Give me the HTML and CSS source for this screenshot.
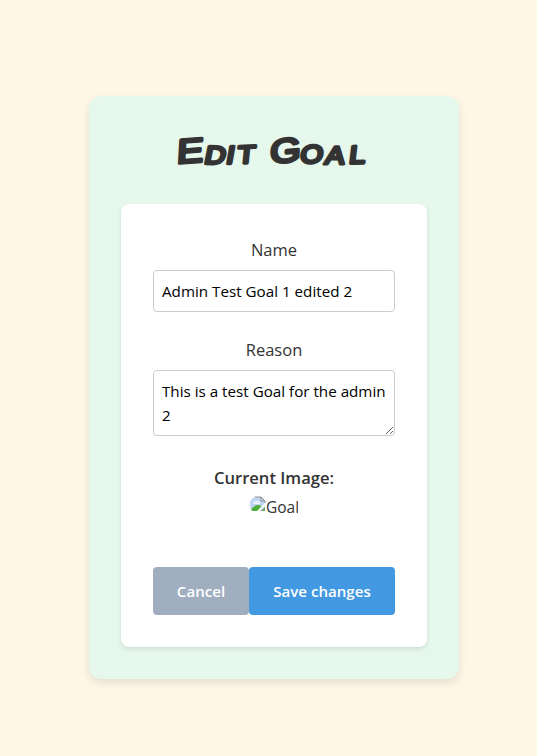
FILE: index.html
```
<!DOCTYPE html>
<html lang="en">
<head>
<meta charset="utf-8">
<title>Edit Goal</title>
<link rel="stylesheet" href="styles.css">
</head>
<body>
<main class="card">
  <h1 class="title">
    <svg class="lettering" width="200" height="48" viewBox="0 0 200 48">
      <text transform="translate(2.500 35.500) skewX(-9) scale(1.15 1)" y="0" x="0 23.500 42.500 52.500 66 81 107.500 128.500 149.500" rotate="-5 2 1 -3 0 -6 -4 0 -2"><tspan class="capital">E</tspan><tspan>DIT </tspan><tspan class="capital">G</tspan><tspan>OAL</tspan></text>
    </svg>
  </h1>
  <form class="form">
    <label class="label" for="name">Name</label>
    <input class="field" id="name" type="text" value="Admin Test Goal 1 edited 2">
    <label class="label" for="reason">Reason</label>
    <textarea class="field area" id="reason">This is a test Goal for the admin 2</textarea>
    <p class="caption">Current Image:</p>
    <div class="image">
      <svg class="broken" width="16" height="16" viewBox="0 0 16 16">
        <path d="M0 6q1-4 5-5h6l4 4v10H3q-3-1-3-5z" fill="#c3d5f5"/>
        <path d="M3 8q0-2 2-2 1-2 3-1 2 0 2 3z" fill="#edf3ff"/>
        <path d="M1 14q3-5 7-5l4 1-4 5H3z" fill="#4caf3d"/>
        <path d="M16 6v3l-7 6H7z" fill="#fff"/>
        <path d="M15 11v4h-4z" fill="#6aa865"/>
        <path d="M5 1h6l4 4v2M11 1v4h4" fill="none" stroke="#929292"/>
      </svg><span class="alt">Goal</span>
    </div>
    <div class="actions">
      <button class="button cancel" type="button">Cancel</button>
      <button class="button save" type="button">Save changes</button>
    </div>
  </form>
</main>
</body>
</html>
```
FILE: styles.css
```
* { box-sizing: border-box; }
body {
  margin: 0;
  padding: 96px 78px 77px 89px;
  background: #fff7e6;
  color: #333;
  font-family: "Segoe UI", "Open Sans", sans-serif;
}
.card {
  height: 583px;
  padding: 32px;
  border-radius: 12px;
  background: #e6f7eb;
  box-shadow: 0 4px 8px rgba(0, 0, 0, .1);
}
.title {
  display: flex;
  justify-content: center;
  height: 48px;
  margin: 0 0 28px;
}
.lettering {
  overflow: visible;
  fill: #333;
  stroke: #333;
  stroke-width: 3.2px;
  stroke-linejoin: round;
  font: 400 25px "Liberation Sans", sans-serif;
}
.capital { font-size: 34px; }
.form {
  display: flex;
  flex-direction: column;
  height: 443px;
  padding: 32px;
  border-radius: 8px;
  background: #fff;
  box-shadow: 0 2px 4px rgba(0, 0, 0, .1);
}
.label {
  height: 26px;
  margin-bottom: 8px;
  font-size: 16.5px;
  line-height: 27px;
  text-align: center;
}
.field {
  display: block;
  width: 100%;
  height: 42px;
  margin: 0 0 24px;
  padding: 8px;
  border: 1px solid #ccc;
  border-radius: 4px;
  background: #fff;
  color: #000;
  font: 15.2px/24px "Segoe UI", "Open Sans", sans-serif;
}
.area {
  height: 66px;
  margin-bottom: 28px;
  padding-right: 6px;
  overflow: hidden;
  resize: both;
}
.caption {
  margin: 0;
  font-size: 16.6px;
  font-weight: 600;
  line-height: 28px;
  text-align: center;
}
.image {
  display: flex;
  align-self: center;
  width: 48px;
  height: 24px;
  margin: 4px 0 47px;
  overflow: hidden;
}
.broken { flex: none; }
.alt { font-size: 15.500px; line-height: 23px; }
.actions { display: flex; }
.button {
  height: 48px;
  padding: 0;
  border: 0;
  border-radius: 4px;
  color: #fff;
  font: 600 15.1px/48px "Segoe UI", "Open Sans", sans-serif;
}
.cancel { width: 96px; background: #a0aec0; }
.save { width: 146px; background: #4299e1; }
```
